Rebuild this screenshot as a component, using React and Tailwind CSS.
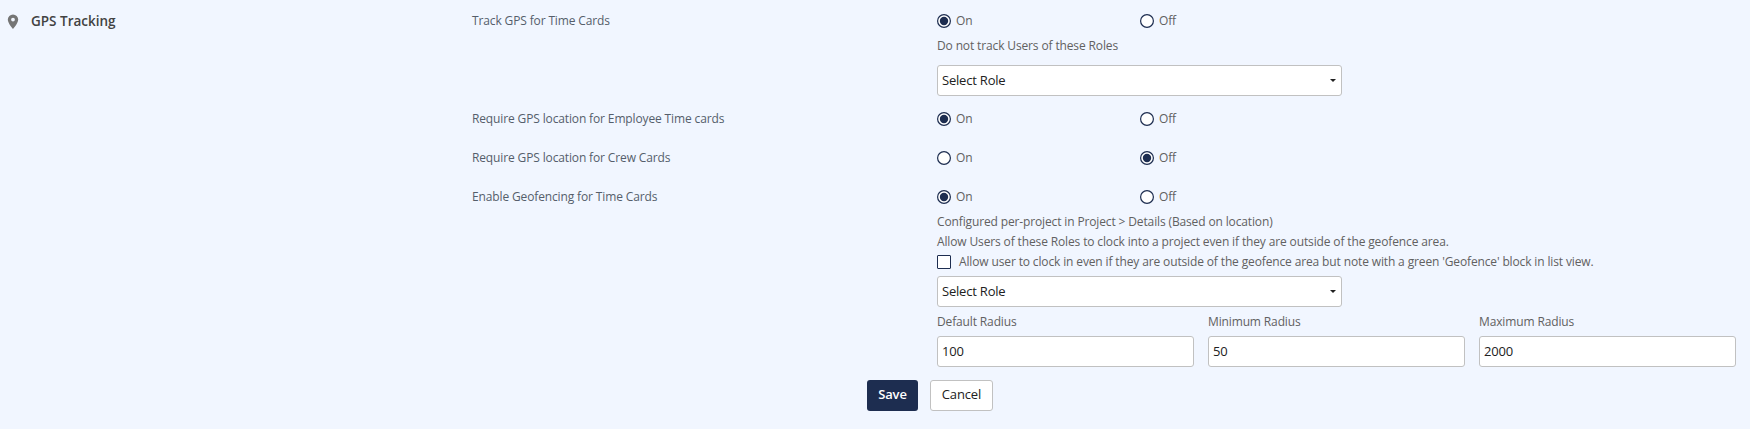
import { useState } from 'react';

function Radio({ label, name, checked, onChange }) {
  return (
    <label className="flex items-center w-[203px] h-5 cursor-pointer">
      <input type="radio" name={name} checked={checked} onChange={onChange} className="sr-only" />
      <svg width="14" height="14" viewBox="0 0 14 14" className="shrink-0">
        <circle cx="7" cy="7" r="6.4" fill="#fff" stroke="#1d2d50" strokeWidth="1.2" />
        {checked && <circle cx="7" cy="7" r="4.2" fill="#1d2d50" />}
      </svg>
      <span className="ml-[5px]">{label}</span>
    </label>
  );
}

function OnOff({ name, initial }) {
  const [value, setValue] = useState(initial);

  return (
    <div className="flex">
      <Radio label="On" name={name} checked={value === 'on'} onChange={() => setValue('on')} />
      <Radio label="Off" name={name} checked={value === 'off'} onChange={() => setValue('off')} />
    </div>
  );
}

function Row({ label, className, children }) {
  return (
    <div className={`flex ${className}`}>
      <div className="w-[465px] shrink-0 h-5 leading-5 text-[#555e6b]">{label}</div>
      <div className="flex-1 leading-5 text-[#616161]">{children}</div>
    </div>
  );
}

function RoleSelect({ className }) {
  return (
    <button
      type="button"
      className={`flex items-center justify-between w-[405px] h-[31px] pl-1 pr-[5px] bg-white border border-[#c1c1c1] rounded-[3px] text-[13px] leading-5 tracking-[-0.2px] text-[#212121] ${className}`}
    >
      <span className="pb-0.5">Select Role</span>
      <svg width="6" height="3" viewBox="0 0 6 3">
        <path d="M0 0h6L3 3z" fill="#212121" />
      </svg>
    </button>
  );
}

function RadiusField({ label, initial }) {
  return (
    <label className="block w-[257px]">
      <span className="block h-5">{label}</span>
      <input
        defaultValue={initial}
        className="block w-full h-[31px] mt-1 px-1 pb-0.5 bg-white border border-[#c1c1c1] rounded-[3px] text-[13px] tracking-[-0.2px] text-[#212121] outline-none"
      />
    </label>
  );
}

export default function App() {
  const [allowOutside, setAllowOutside] = useState(false);

  return (
    <div className="h-[429px] overflow-hidden bg-[#f1f6ff] pt-[11px] font-['Open_Sans',sans-serif] text-[12px] tracking-[-0.135px]">
      <div className="flex">
        <div className="flex w-[472px] shrink-0 h-[21px] items-center pl-[7px]">
          <svg width="12" height="16" viewBox="0 0 12 16">
            <path
              d="M6 .4A5.2 5.2 0 0 0 .8 5.6C.8 9.5 6 15 6 15S11.2 9.5 11.2 5.6A5.2 5.2 0 0 0 6 .4zm0 7.1a1.9 1.9 0 1 1 0-3.8 1.9 1.9 0 0 1 0 3.8z"
              fill="#757575"
            />
          </svg>
          <h2 className="ml-3 text-[13.5px] font-semibold tracking-normal text-[#424242]">GPS Tracking</h2>
        </div>

        <div className="flex-1">
          <Row label="Track GPS for Time Cards" className="h-[98px]">
            <OnOff name="trackGps" initial="on" />
            <p className="mt-[5px]">Do not track Users of these Roles</p>
            <RoleSelect className="mt-[9px]" />
          </Row>
          <Row label="Require GPS location for Employee Time cards" className="h-[39px]">
            <OnOff name="employeeCards" initial="on" />
          </Row>
          <Row label="Require GPS location for Crew Cards" className="h-[39px]">
            <OnOff name="crewCards" initial="off" />
          </Row>
          <Row label="Enable Geofencing for Time Cards" className="h-[180px]">
            <OnOff name="geofencing" initial="on" />
            <p className="mt-[5px]">Configured per-project in Project &gt; Details (Based on location)</p>
            <p>Allow Users of these Roles to clock into a project even if they are outside of the geofence area.</p>
            <label className="flex items-center h-5">
              <input
                type="checkbox"
                checked={allowOutside}
                onChange={(e) => setAllowOutside(e.target.checked)}
                className="appearance-none w-[14px] h-[14px] bg-white border border-[#1d2d50] rounded-[1px] checked:bg-[#1d2d50]"
              />
              <span className="ml-2">
                Allow user to clock in even if they are outside of the geofence area but note with a green 'Geofence' block in list view.
              </span>
            </label>
            <RoleSelect className="mt-1" />
            <div className="flex gap-[14px] mt-[5px]">
              <RadiusField label="Default Radius" initial="100" />
              <RadiusField label="Minimum Radius" initial="50" />
              <RadiusField label="Maximum Radius" initial="2000" />
            </div>
          </Row>
        </div>
      </div>

      <div className="flex gap-3 mt-[13px] ml-[867px] text-[13px]">
        <button className="w-[51px] h-[31px] pb-0.5 rounded-[3px] bg-[#1d2d50] font-semibold text-white">Save</button>
        <button className="w-[63px] h-[31px] pb-0.5 rounded-[3px] border border-[#c1c1c1] bg-white text-[#212121]">
          Cancel
        </button>
      </div>
    </div>
  );
}
